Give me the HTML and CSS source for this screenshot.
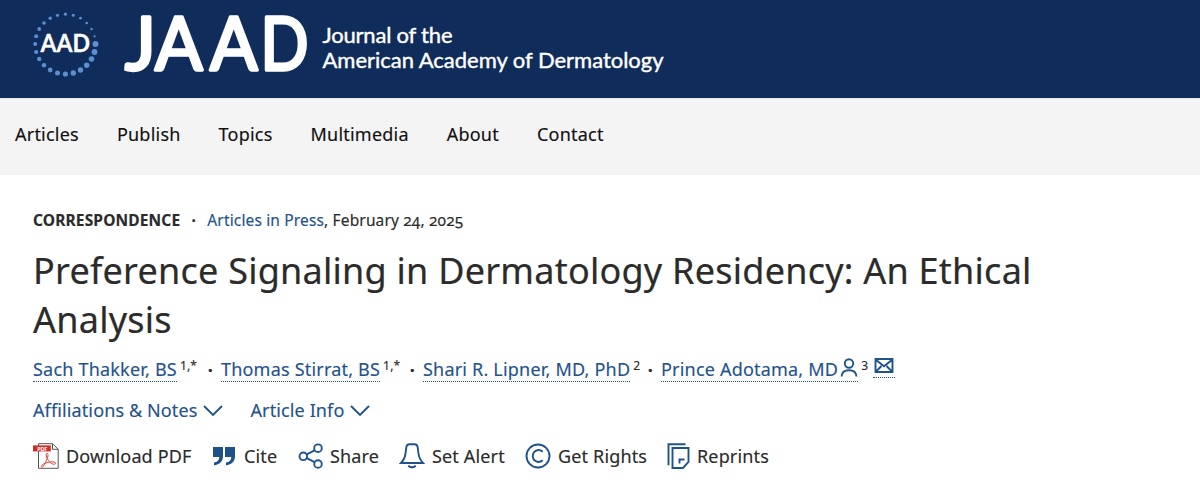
FILE: index.html
```html
<!DOCTYPE html>
<html lang="en">
<head>
    <meta charset="UTF-8">
    <meta name="viewport" content="width=device-width, initial-scale=1.0">
    <title>Preference Signaling in Dermatology Residency: An Ethical Analysis</title>
    <link rel="stylesheet" href="styles.css">
</head>
<body>
    <header class="site-header">
        <svg class="logo" width="680" height="98" viewBox="0 0 680 98">
            <g fill="#5b8fd0">
                <circle cx="95.5" cy="44" r="3"/>
                <circle cx="94.5" cy="52" r="2.9"/>
                <circle cx="91.5" cy="59" r="2.8"/>
                <circle cx="86.7" cy="65.3" r="2.7"/>
                <circle cx="80.5" cy="70" r="2.7"/>
                <circle cx="73.3" cy="73" r="2.7"/>
                <circle cx="65.4" cy="74" r="2.6"/>
                <circle cx="57.5" cy="73" r="2.5"/>
                <circle cx="50.2" cy="70" r="2.4"/>
                <circle cx="44" cy="65.3" r="2.3"/>
                <circle cx="39.2" cy="59" r="2.2"/>
                <circle cx="36.2" cy="52" r="2.1"/>
                <circle cx="35.2" cy="44" r="2"/>
                <circle cx="36.2" cy="36.3" r="2"/>
                <circle cx="39.2" cy="29" r="1.9"/>
                <circle cx="44" cy="23" r="1.8"/>
                <circle cx="50.2" cy="18.2" r="1.7"/>
                <circle cx="57.5" cy="15.3" r="1.6"/>
                <circle cx="65.4" cy="14.2" r="1.6"/>
                <circle cx="73.3" cy="15.3" r="1.5"/>
                <circle cx="80.5" cy="18.2" r="1.4"/>
                <circle cx="86.7" cy="23" r="1.3"/>
                <circle cx="91.6" cy="29" r="1.2"/>
                <circle cx="94.6" cy="36.3" r="1.1"/>
            </g>
            <text class="logo-aad" x="40.5" y="51.5" textLength="49.5" lengthAdjust="spacingAndGlyphs">AAD</text>
            <text class="logo-jaad" x="125" y="70">J</text>
            <text class="logo-jaad" x="155" y="70" textLength="47.500" lengthAdjust="spacingAndGlyphs">A</text>
            <text class="logo-jaad" x="210" y="70" textLength="47.500" lengthAdjust="spacingAndGlyphs">A</text>
            <text class="logo-jaad" x="260.5" y="70" textLength="48" lengthAdjust="spacingAndGlyphs">D</text>
            <text class="logo-name" x="322.5" y="42.5" textLength="130">Journal of the</text>
            <text class="logo-name" x="322.5" y="68" textLength="341">American Academy of Dermatology</text>
        </svg>
    </header>

    <nav class="main-nav">
        <a href="#">Articles</a>
        <a href="#">Publish</a>
        <a href="#">Topics</a>
        <a href="#">Multimedia</a>
        <a href="#">About</a>
        <a href="#">Contact</a>
    </nav>

    <main class="article">
        <div class="meta">
            <strong>CORRESPONDENCE</strong><span class="meta-dot">·</span><a href="#">Articles in Press</a>, <span class="date">February 24, 2025</span>
        </div>

        <h1>Preference Signaling in Dermatology Residency: An Ethical Analysis</h1>

        <div class="authors">
            <div class="author first"><a href="#">Sach Thakker, BS</a><sup>1,*</sup><span class="dot">·</span></div>
            <div class="author second"><a href="#">Thomas Stirrat, BS</a><sup>1,*</sup><span class="dot">·</span></div>
            <div class="author third"><a href="#">Shari R. Lipner, MD, PhD</a><sup>2</sup><span class="dot">·</span></div>
            <div class="author"><a href="#">Prince Adotama, MD<svg class="person" width="19" height="20" viewBox="0 0 19 20">
                <circle cx="10" cy="5.5" r="4.2"/>
                <path d="M2.500 18.500c.3-4.500 2.800-6.300 7.500-6.300s7.200 1.800 7.500 6.300"/>
            </svg></a><sup>3</sup><a class="mail" href="#"><svg width="22" height="18" viewBox="0 0 22 18">
                <path d="M2.5 2h17v13h-17zM2.5 2.5l8.5 6.800 8.500-6.800M3 14.500l5.500-5.500M19 14.500l-5.500-5.500"/>
            </svg></a></div>
        </div>

        <div class="info">
            <a href="#">Affiliations &amp; Notes<svg width="20" height="12" viewBox="0 0 20 12"><path d="M1 1l9 9 9-9"/></svg></a>
            <a href="#">Article Info<svg width="20" height="12" viewBox="0 0 20 12"><path d="M1 1l9 9 9-9"/></svg></a>
        </div>

        <div class="tools">
            <a class="pdf" href="#">
                <svg width="26" height="26" viewBox="0 0 26 26">
                    <path d="M5.5.7h14l5.7 5.6v19H5.5z" fill="#fff" stroke="#555" stroke-width="1"/>
                    <path d="M19.5.7v5.6h5.7" fill="none" stroke="#555" stroke-width="1"/>
                    <path d="M0 2.4h17.8v6H0z" fill="#d32a26"/>
                    <text class="pdf-label" x="4.3" y="7.5" textLength="10">PDF</text>
                    <path d="M14.2 10.5c-1.7-.2-1 3.1.1 5 1.3 2.4 3.3 5 5.6 5.6 1.7.4 3.4-.3 2.5-1.5-1-1.2-5.5-.9-8.3 0-2.8.8-5.7 2.3-5.7 3.8 0 1.2 1.8.8 3.1-1.8 1.6-3.2 3.1-6.5 3.5-9 .2-1.2 0-2-.8-2.1z" fill="none" stroke="#dc4338" stroke-width="1"/>
                </svg>
                Download PDF
            </a>
            <a class="cite" href="#">
                <svg width="24" height="20" viewBox="0 0 24 20">
                    <path d="M1 1h10v9c0 5.5-3.4 8.8-9 9.2v-2.6c3.5-.6 5.2-2.3 5.3-5.6H1zM13 1h10v9c0 5.5-3.4 8.8-9 9.2v-2.6c3.5-.6 5.2-2.3 5.3-5.6H13z" fill="#1c5288"/>
                </svg>
                Cite
            </a>
            <a class="share" href="#">
                <svg class="line" width="26" height="26" viewBox="0 0 26 26">
                    <circle cx="5.3" cy="13.3" r="3.8"/>
                    <circle cx="20" cy="5.2" r="3.8"/>
                    <circle cx="20" cy="21" r="3.8"/>
                    <path d="M8.8 11.4l7.7-4.1M8.8 15.2l7.7 3.9"/>
                </svg>
                Share
            </a>
            <a class="alert" href="#">
                <svg class="line" width="26" height="26" viewBox="0 0 26 26">
                    <path d="M2 20h22c-3-3-4-5.5-4.5-9.5L18.6 3.8C18.3 2 17.3 1.2 15.5 1.2h-5C8.7 1.2 7.7 2 7.4 3.8L6.5 10.5C6 14.5 5 17 2 20z"/>
                    <path d="M9.2 22.7q3.8 3.2 7.6 0"/>
                </svg>
                Set Alert
            </a>
            <a class="rights" href="#">
                <svg class="line" width="26" height="26" viewBox="0 0 26 26">
                    <circle cx="13" cy="13" r="11.5"/>
                    <path d="M17.7 8.7c-4-3.5-9.9-1-9.9 4.3s5.9 7.8 9.9 4.3"/>
                </svg>
                Get Rights
            </a>
            <a class="reprints" href="#">
                <svg class="line" width="24" height="26" viewBox="0 0 24 26">
                    <path d="M18.5 1.3H1.5v21"/>
                    <path d="M5.5 5h16v14l-5.5 6H5.5zM12.500 20.500v-4h5"/>
                </svg>
                Reprints
            </a>
        </div>
    </main>
</body>
</html>
```

FILE: styles.css
```css
* {
    box-sizing: border-box;
}
body {
    margin: 0;
    font-family: "Noto Sans", sans-serif;
    font-size: 18px;
    line-height: 26px;
    color: #2b2b2b;
    background: #fff;
    overflow: hidden;
    -webkit-text-stroke: 0.15px;
}
a {
    color: #1f538c;
    text-decoration: none;
}
.site-header {
    height: 98px;
    background: #102c5a;
}
.logo {
    display: block;
}
.logo text {
    font-family: Lato, sans-serif;
    fill: #fff;
}
.logo .logo-aad {
    font-size: 24px;
    font-weight: 700;
    stroke: #fff;
    stroke-width: 0.3;
    stroke-linejoin: round;
}
.logo .logo-jaad {
    font-size: 73px;
    font-weight: 400;
    stroke: #fff;
    stroke-width: 3.4;
    stroke-linejoin: round;
}
.logo .logo-name {
    font-size: 22px;
    stroke: #fff;
    stroke-width: 0.4;
}
.main-nav {
    display: flex;
    gap: 38px;
    height: 77px;
    padding: 22px 15px 0;
    background: #f4f4f4;
    border-top: 1px solid #e3e3e8;
    letter-spacing: 0.22px;
}
.main-nav a {
    color: #111;
}
.article {
    padding: 32px 33px 0;
}
.meta {
    font-size: 15.5px;
    letter-spacing: 0.15px;
}
.meta-dot {
    display: inline-block;
    width: 27px;
    text-align: center;
    font-weight: 700;
}
.date {
    font-variant-numeric: oldstyle-nums;
}
h1 {
    width: 1040px;
    margin: 13px 0 0;
    font-size: 36px;
    font-weight: 400;
    line-height: 49px;
    letter-spacing: 0.24px;
    -webkit-text-stroke: 0.2px;
}
.authors {
    display: flex;
    margin-top: 13px;
    letter-spacing: 0.2px;
}
.author {
    display: flex;
}
.author a {
    height: 25px;
    line-height: 25px;
    border-bottom: 1px dotted #1f538c;
}
.author sup {
    margin-left: 3px;
    font-size: 12px;
    line-height: 17px;
}
.dot {
    margin: 0 8px 0 auto;
    font-weight: 700;
}
.first {
    width: 188px;
}
.second {
    width: 202px;
}
.third {
    width: 238px;
}
.person {
    margin-left: 1px;
    vertical-align: -2px;
}
.author .mail {
    height: 21px;
    margin-left: 5px;
    line-height: 0;
}
.author svg,
.info svg,
.line {
    fill: none;
    stroke: #1f538c;
    stroke-width: 1.9;
}
.info {
    display: flex;
    gap: 27px;
    margin-top: 14px;
    letter-spacing: 0.12px;
}
.info svg {
    margin-left: 6px;
}
.tools {
    display: flex;
    margin-top: 20px;
    letter-spacing: 0.15px;
}
.tools a {
    display: flex;
    align-items: center;
    color: #2b2b2b;
}
.tools svg {
    flex: none;
}
.pdf {
    width: 179px;
    gap: 7px;
}
.cite {
    width: 86px;
    gap: 8px;
}
.share {
    width: 101px;
    gap: 6px;
}
.alert {
    width: 126px;
    gap: 7px;
}
.rights {
    width: 142px;
    gap: 7px;
}
.reprints {
    gap: 6px;
}
.pdf-label {
    font-size: 5.5px;
    font-weight: 700;
    fill: #fff;
}
```
